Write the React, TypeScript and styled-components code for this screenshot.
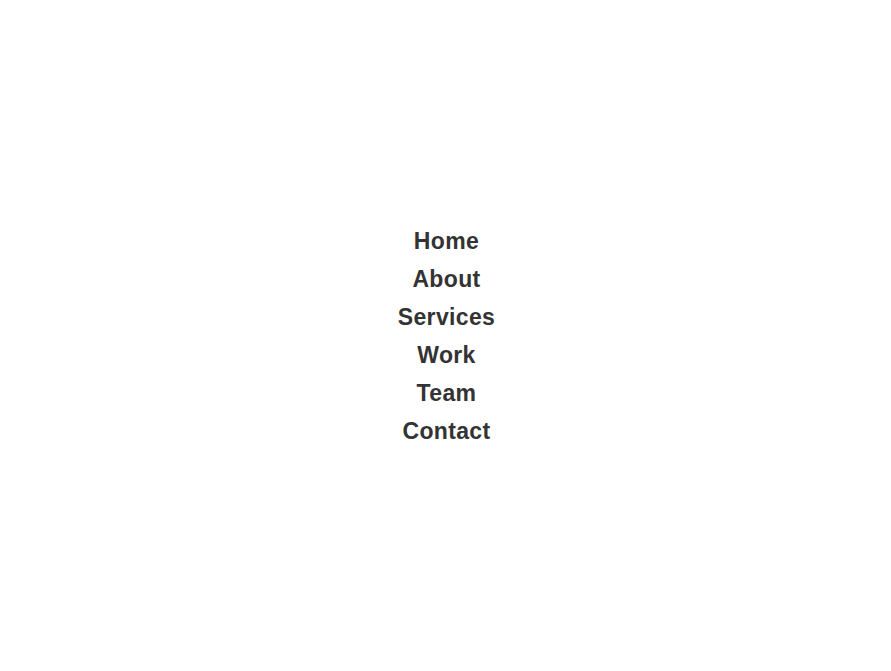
import React from "react";
import styled, { createGlobalStyle } from "styled-components";

const Global = createGlobalStyle`
  html, body { margin: 0; padding: 0; background: #fff; }
  body { font-family: "Liberation Sans", Arial, sans-serif; }
`;

const Page = styled.div`
  height: 671px;
  display: flex;
  align-items: center;
  justify-content: center;
  padding-left: 2px;
  box-sizing: border-box;
`;

const Menu = styled.nav`
  display: flex;
  flex-direction: column;
  align-items: center;
`;

const Item = styled.a`
  display: block;
  font-size: 23px;
  font-weight: 700;
  letter-spacing: 0.35px;
  line-height: 38px;
  color: #333;
  text-decoration: none;
`;

const items = ["Home", "About", "Services", "Work", "Team", "Contact"];

export default function App() {
  return (
    <>
      <Global />
      <Page>
        <Menu>
          {items.map((i) => (
            <Item key={i} href="#">{i}</Item>
          ))}
        </Menu>
      </Page>
    </>
  );
}
